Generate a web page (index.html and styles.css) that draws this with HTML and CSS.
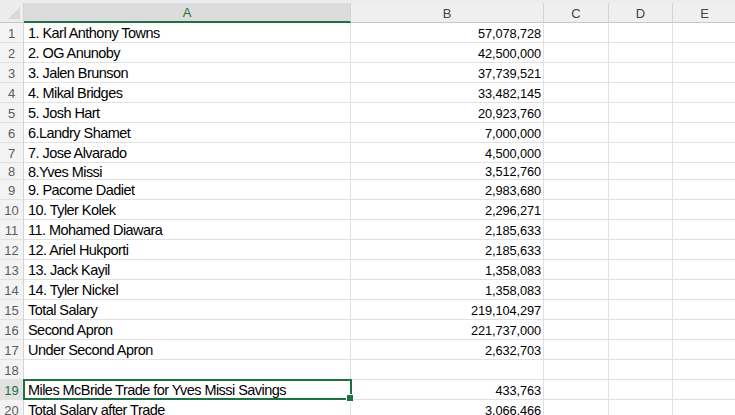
FILE: index.html
```html
<!DOCTYPE html>
<html lang="en">
<head>
    <meta charset="UTF-8">
    <title>Knicks Salary</title>
    <link rel="stylesheet" href="styles.css">
</head>
<body>
    <div class="sheet">
        <div class="row head">
            <div class="cell rh corner"><span class="tri"></span></div>
            <div class="cell ca sel-col">A</div>
            <div class="cell cb">B</div>
            <div class="cell cc">C</div>
            <div class="cell cd">D</div>
            <div class="cell ce">E</div>
        </div>

        <div class="row"><div class="cell rh">1</div><div class="cell ca">1. Karl Anthony Towns</div><div class="cell cb num">57,078,728</div><div class="cell cc"></div><div class="cell cd"></div><div class="cell ce"></div></div>
        <div class="row"><div class="cell rh">2</div><div class="cell ca">2. OG Anunoby</div><div class="cell cb num">42,500,000</div><div class="cell cc"></div><div class="cell cd"></div><div class="cell ce"></div></div>
        <div class="row"><div class="cell rh">3</div><div class="cell ca">3. Jalen Brunson</div><div class="cell cb num">37,739,521</div><div class="cell cc"></div><div class="cell cd"></div><div class="cell ce"></div></div>
        <div class="row"><div class="cell rh">4</div><div class="cell ca">4. Mikal Bridges</div><div class="cell cb num">33,482,145</div><div class="cell cc"></div><div class="cell cd"></div><div class="cell ce"></div></div>
        <div class="row"><div class="cell rh">5</div><div class="cell ca">5. Josh Hart</div><div class="cell cb num">20,923,760</div><div class="cell cc"></div><div class="cell cd"></div><div class="cell ce"></div></div>
        <div class="row"><div class="cell rh">6</div><div class="cell ca">6.Landry Shamet</div><div class="cell cb num">7,000,000</div><div class="cell cc"></div><div class="cell cd"></div><div class="cell ce"></div></div>
        <div class="row"><div class="cell rh">7</div><div class="cell ca">7. Jose Alvarado</div><div class="cell cb num">4,500,000</div><div class="cell cc"></div><div class="cell cd"></div><div class="cell ce"></div></div>
        <div class="row short"><div class="cell rh">8</div><div class="cell ca">8.Yves Missi</div><div class="cell cb num">3,512,760</div><div class="cell cc"></div><div class="cell cd"></div><div class="cell ce"></div></div>
        <div class="row"><div class="cell rh">9</div><div class="cell ca">9. Pacome Dadiet</div><div class="cell cb num">2,983,680</div><div class="cell cc"></div><div class="cell cd"></div><div class="cell ce"></div></div>
        <div class="row"><div class="cell rh">10</div><div class="cell ca">10. Tyler Kolek</div><div class="cell cb num">2,296,271</div><div class="cell cc"></div><div class="cell cd"></div><div class="cell ce"></div></div>
        <div class="row"><div class="cell rh">11</div><div class="cell ca">11. Mohamed Diawara</div><div class="cell cb num">2,185,633</div><div class="cell cc"></div><div class="cell cd"></div><div class="cell ce"></div></div>
        <div class="row"><div class="cell rh">12</div><div class="cell ca">12. Ariel Hukporti</div><div class="cell cb num">2,185,633</div><div class="cell cc"></div><div class="cell cd"></div><div class="cell ce"></div></div>
        <div class="row"><div class="cell rh">13</div><div class="cell ca">13. Jack Kayil</div><div class="cell cb num">1,358,083</div><div class="cell cc"></div><div class="cell cd"></div><div class="cell ce"></div></div>
        <div class="row"><div class="cell rh">14</div><div class="cell ca">14. Tyler Nickel</div><div class="cell cb num">1,358,083</div><div class="cell cc"></div><div class="cell cd"></div><div class="cell ce"></div></div>
        <div class="row"><div class="cell rh">15</div><div class="cell ca">Total Salary</div><div class="cell cb num">219,104,297</div><div class="cell cc"></div><div class="cell cd"></div><div class="cell ce"></div></div>
        <div class="row"><div class="cell rh">16</div><div class="cell ca">Second Apron</div><div class="cell cb num">221,737,000</div><div class="cell cc"></div><div class="cell cd"></div><div class="cell ce"></div></div>
        <div class="row"><div class="cell rh">17</div><div class="cell ca">Under Second Apron</div><div class="cell cb num">2,632,703</div><div class="cell cc"></div><div class="cell cd"></div><div class="cell ce"></div></div>
        <div class="row"><div class="cell rh">18</div><div class="cell ca"></div><div class="cell cb num"></div><div class="cell cc"></div><div class="cell cd"></div><div class="cell ce"></div></div>
        <div class="row"><div class="cell rh sel-row">19</div><div class="cell ca active">Miles McBride Trade for Yves Missi Savings<span class="handle"></span></div><div class="cell cb num">433,763</div><div class="cell cc"></div><div class="cell cd"></div><div class="cell ce"></div></div>
        <div class="row"><div class="cell rh">20</div><div class="cell ca">Total Salary after Trade</div><div class="cell cb num">3,066,466</div><div class="cell cc"></div><div class="cell cd"></div><div class="cell ce"></div></div>
    </div>
</body>
</html>
```

FILE: styles.css
```css
body {
    margin: 0;
    background-color: #fff;
    overflow: hidden;
}

.sheet {
    padding-top: 3px;
    background-color: #e9edf0;
    width: 740px;
}

.row {
    display: flex;
    height: 20px;
    background-color: #fff;
}

.row.short {
    height: 17px;
}

.cell {
    box-sizing: border-box;
    height: 100%;
    border-right: 1px solid #e1e1e1;
    border-bottom: 1px solid #e1e1e1;
    font-family: "Liberation Sans", Arial, sans-serif;
    font-size: 14.5px;
    letter-spacing: -0.55px;
    color: #000;
    white-space: nowrap;
    overflow: hidden;
    display: flex;
    align-items: center;
    padding: 1px 4px 0;
    position: relative;
}

.rh {
    width: 24px;
    justify-content: center;
    padding: 1px 0 0;
    background-color: #f3f3f3;
    border-right-color: #d4d4d4;
    color: #5c5c5c;
    font-size: 13px;
    letter-spacing: 0;
}

.ca { width: 327px; }
.cb { width: 193px; }
.cc { width: 65px; }
.cd { width: 64px; }
.ce { width: 64px; }

.num {
    justify-content: flex-end;
    padding-right: 2px;
    font-size: 12.8px;
    letter-spacing: -0.1px;
}

/* column header row */
.head .cell {
    background-color: #efefef;
    border-bottom-color: #c8c8c8;
    border-right-color: #d4d4d4;
    justify-content: center;
    color: #444;
    font-size: 13px;
    letter-spacing: 0;
}

.head .corner {
    background-color: #ececec;
}

.tri {
    position: absolute;
    right: 3px;
    bottom: 3px;
    width: 0;
    height: 0;
    border-left: 12px solid transparent;
    border-bottom: 12px solid #d9d9d9;
}

.head .sel-col {
    background-color: #dcdcdc;
    border-bottom: 2px solid #1e7145;
    color: #1e7145;
}

.rh.sel-row {
    background-color: #e1e1e1;
    color: #1e7145;
}

.active {
    overflow: visible;
    z-index: 2;
}

.active::after {
    content: "";
    position: absolute;
    left: -1px;
    top: -1px;
    right: -2px;
    bottom: -1px;
    border: 2px solid #1e7145;
}

.handle {
    position: absolute;
    right: -4px;
    bottom: -3px;
    width: 6px;
    height: 6px;
    background-color: #1e7145;
    border: 1px solid #fff;
    z-index: 3;
}
```
